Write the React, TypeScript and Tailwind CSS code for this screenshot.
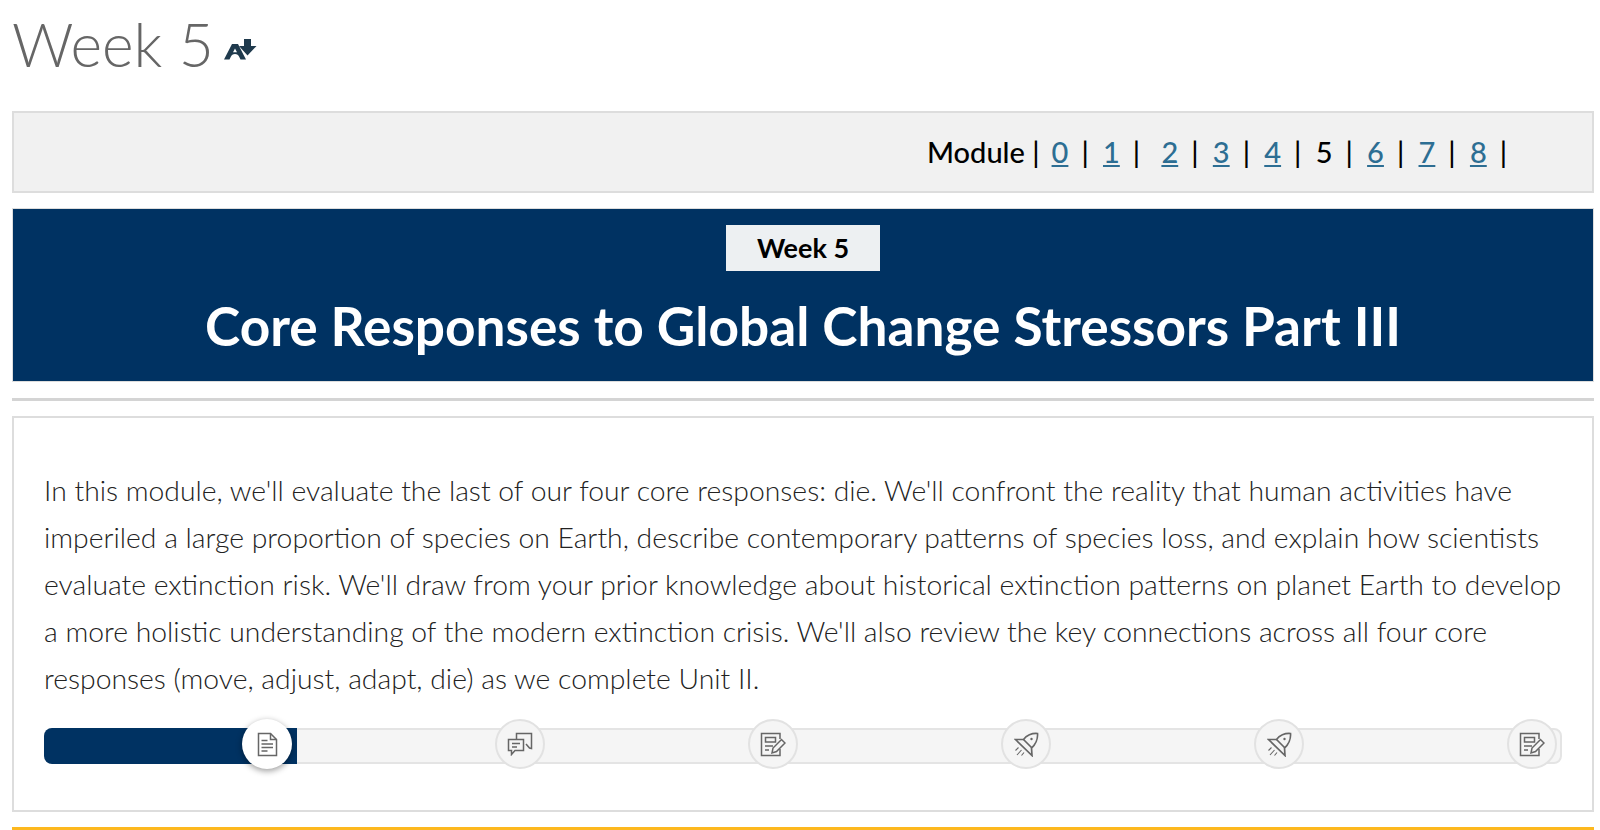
const LINKS = ['0', '1', '2', '3', '4', '5', '6', '7', '8']

function SortIcon() {
  return (
    <svg width="33" height="21" viewBox="0 0 33 21" className="shrink-0">
      <path fill="#1f3a4d" fillRule="evenodd" d="M8 5h6l8 15.500h-5.500l-1.200-2.500c-.8-1.800-2.200-3-4.300-3s-3.500 1.200-4.300 3l-1.200 2.500H0L8 5Zm3 4.500-2 3.800h4l-2-3.800Z" />
      <path fill="#1f3a4d" d="M20 0h7v7h5.500L23.500 16.500 15 7h5V0Z" />
    </svg>
  )
}

function DocIcon() {
  return (
    <svg width="21" height="25" viewBox="0 0 21 25" fill="none" stroke="#666" strokeWidth="1.5">
      <path d="M1.500 1.500h12l6 6v16h-18v-22Z" />
      <path d="M13.500 1.500v6h6" />
      <path d="M4.500 8.500h6M4.500 12h11.500M4.500 15.500h11.500M4.500 19h6" />
    </svg>
  )
}

function ChatIcon() {
  return (
    <svg width="26" height="24" viewBox="0 0 26 24" fill="none" stroke="#666" strokeWidth="1.5">
      <path d="M1.500 7.500h15v11H8l-3.500 4v-4h-3v-11Z" />
      <path d="M9.500 7V1.500h15v15l-2-.5-3.500-4" />
      <path d="M5 11.500h8M5 15h5" />
    </svg>
  )
}

function NoteIcon() {
  return (
    <svg width="26" height="25" viewBox="0 0 26 25" fill="none" stroke="#666" strokeWidth="1.5">
      <path d="M20 7V1.500H1.500v22H20V17" />
      <path d="M5.500 5.500h10v4.500h-10zM5 14h8M5 18h4" />
      <path d="M12 21l1-5 8.500-8.500 3.500 3.500-8.500 8.500-4.500 1.500Z" />
    </svg>
  )
}

function RocketIcon() {
  return (
    <svg width="25" height="25" viewBox="0 0 25 25" fill="none" stroke="#666" strokeWidth="1.7">
      <path d="M1.500 7.500h8C12 3.500 18 1 23.500 1.500c.5 5-2 11-6 14.500l.5 7.500-16.500-16Z" />
      <path d="M9.500 7.500l8 8" />
      <circle cx="17.500" cy="7" r="1.200" fill="#666" stroke="none" />
      <path d="M4.500 15.500l-3 3M7.500 18l-4.500 5M10 20.500l-2.500 3" strokeWidth="1.100" />
    </svg>
  )
}

function Stop({ active, children }: { active?: boolean; children: React.ReactNode }) {
  return (
    <div className={active
      ? 'flex h-[50px] w-[50px] items-center justify-center rounded-full bg-white shadow-[0_2px_6px_rgba(0,0,0,0.4)]'
      : 'flex h-[50px] w-[50px] items-center justify-center rounded-full border-2 border-[#e2e2e2] bg-[#f5f5f5]'}>
      {children}
    </div>
  )
}

export default function App() {
  return (
    <div className="h-[830px] overflow-hidden bg-white pl-3 pr-[6px] font-['Lato','Liberation_Sans',sans-serif] text-black">
      <div className="flex h-[111px] items-start">
        <h1 className="mt-[7px] flex items-center gap-[10px] text-[60.5px] font-light leading-[74px] text-[#666]">
          Week 5
          <span className="mt-[11px]"><SortIcon /></span>
        </h1>
      </div>

      <div className="flex h-[82px] items-center border-2 border-[#ddd] bg-[#f1f1f1] pl-[913px] text-[29px] font-medium">
        <span className="mr-[3px]">Module |</span>
        {LINKS.map(n => (
          <span key={n} className="flex items-center">
            {n === '5'
              ? <span className="ml-[9px]">5</span>
              : <a href="#" className={n === '2' ? 'ml-[16px] text-[#2d6e93] underline' : 'ml-[9px] text-[#2d6e93] underline'}>{n}</a>}
            <span className="ml-[13px] w-[12.6px]">|</span>
          </span>
        ))}
      </div>

      <div className="mt-[15px] flex h-[174px] flex-col items-center border border-[#ddd] bg-[#003262]">
        <div className="mt-[15px] flex h-[48px] w-[156px] items-center justify-center border border-[#003262] bg-[#edf0f2] text-[27px] font-bold">
          Week 5
        </div>
        <h2 className="mt-[18px] text-[53.2px] font-bold leading-[70px] text-white">
          Core Responses to Global Change Stressors Part III
        </h2>
      </div>

      <hr className="mt-[16px] border-t-[3px] border-[#d4d4d4]" />

      <div className="mt-[15px] h-[396px] border-2 border-[#ddd] px-[30px] pt-[49px]">
        <p className="text-[28.33px] font-light leading-[47px] text-[#222]">
          In this module, we'll evaluate the last of our four core responses: die. We'll confront the reality that human activities have imperiled a large proportion of species on Earth, describe contemporary patterns of species loss, and explain how scientists evaluate extinction risk. We'll draw from your prior knowledge about historical extinction patterns on planet Earth to develop a more holistic understanding of the modern extinction crisis. We'll also review the key connections across all four core responses (move, adjust, adapt, die) as we complete Unit II.
        </p>

        <div className="relative mt-[26px] h-[36px] w-[1518px] rounded-[8px] border-2 border-[#e4e4e4] bg-[#f5f5f5]">
          <div className="absolute -inset-[2px] right-auto w-[253px] rounded-l-[8px] bg-[#003262]" />
          <div className="absolute -inset-x-[2px] -top-[11px] flex justify-between pl-[198px] pr-[5px]">
            <Stop active><DocIcon /></Stop>
            <Stop><ChatIcon /></Stop>
            <Stop><NoteIcon /></Stop>
            <Stop><RocketIcon /></Stop>
            <Stop><RocketIcon /></Stop>
            <Stop><NoteIcon /></Stop>
          </div>
        </div>
      </div>

      <div className="mt-[15px] h-[4px] bg-[#fdb81e]" />
    </div>
  )
}
